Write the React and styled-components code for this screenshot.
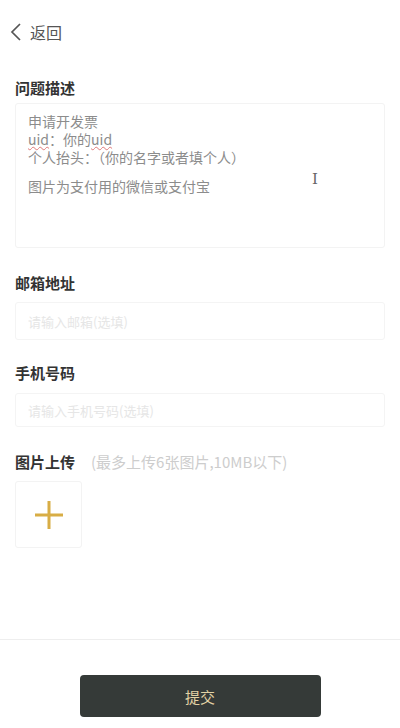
import React from 'react';
import styled, { createGlobalStyle } from 'styled-components';

const GlobalStyle = createGlobalStyle`
  html, body {
    margin: 0;
    padding: 0;
    background: #fff;
    font-family: "Noto Sans CJK SC", "Noto Sans", sans-serif;
  }
`;

const Page = styled.div`
  width: 400px;
  height: 728px;
  display: flex;
  flex-direction: column;
  background: #fff;
  overflow: hidden;
`;

const Header = styled.div`
  height: 64px;
  display: flex;
  align-items: center;
  gap: 7px;
  padding: 0 0 0 9px;
  color: #555;
  font-size: 16px;
`;

const Form = styled.div`
  flex: 1;
  padding: 13px 15px 0;
  display: flex;
  flex-direction: column;
`;

const Label = styled.div`
  display: flex;
  align-items: baseline;
  gap: 16px;
  font-size: 15px;
  font-weight: 700;
  color: #333;
  line-height: 22px;
  margin-bottom: ${p => p.gap || 8}px;
`;

const Hint = styled.span`
  font-size: 15px;
  font-weight: 400;
  color: #cdcdcd;
`;

const TextBox = styled.div`
  height: 145px;
  box-sizing: border-box;
  border: 1px solid #f3f3f3;
  border-radius: 3px;
  padding: 8px 12px 10px;
  font-size: 14px;
  line-height: 18px;
  color: #8c8c8c;
  margin-bottom: 24px;
  position: relative;
`;

const Line = styled.div`
  height: ${p => p.h || 18}px;
  line-height: 18px;
`;

const Spell = styled.span`
  text-decoration: underline wavy #e07a7a;
  text-decoration-thickness: 1px;
  text-underline-offset: 1px;
`;

const Cursor = styled.span`
  position: absolute;
  left: 296px;
  top: 66px;
  font-family: "DejaVu Serif", serif;
  font-size: 15px;
  line-height: 18px;
  color: #666;
`;

const Input = styled.input`
  height: ${p => p.h || 38}px;
  box-sizing: border-box;
  border: 1px solid #f4f4f4;
  border-radius: 3px;
  padding: 0 12px;
  font-size: 13px;
  font-family: inherit;
  color: #333;
  outline: none;
  margin-bottom: ${p => p.mb || 24}px;
  &::placeholder {
    color: #e6e6e6;
  }
`;

const UploadBox = styled.div`
  width: 67px;
  height: 67px;
  box-sizing: border-box;
  border: 1px solid #f3f3f3;
  border-radius: 3px;
  display: flex;
  align-items: center;
  justify-content: center;
`;

const Footer = styled.div`
  border-top: 1px solid #eeeeee;
  height: 89px;
  display: flex;
  justify-content: center;
  padding-top: 35px;
  box-sizing: border-box;
`;

const SubmitButton = styled.button`
  width: 241px;
  height: 42px;
  border: none;
  border-radius: 4px;
  background: #353a38;
  color: #e3d3a6;
  font-size: 15px;
  font-family: inherit;
`;

export default function App() {
  return (
    <Page>
      <GlobalStyle />
      <Header>
        <svg width="14" height="20" viewBox="0 0 14 20">
          <path d="M11 2 L3 10 L11 18" fill="none" stroke="#555" strokeWidth="1.7" />
        </svg>
        <span>返回</span>
      </Header>
      <Form>
        <Label gap={4}>问题描述</Label>
        <TextBox>
          <Line>申请开发票</Line>
          <Line><Spell>uid</Spell>：你的<Spell>uid</Spell></Line>
          <Line>个人抬头：（你的名字或者填个人）</Line>
          <Line h={11} />
          <Line>图片为支付用的微信或支付宝</Line>
          <Cursor>I</Cursor>
        </TextBox>
        <Label>邮箱地址</Label>
        <Input mb={22} placeholder="请输入邮箱(选填)" />
        <Label gap={9}>手机号码</Label>
        <Input h={34} placeholder="请输入手机号码(选填)" />
        <Label gap={8}>
          图片上传<Hint>(最多上传6张图片,10MB以下)</Hint>
        </Label>
        <UploadBox>
          <svg width="32" height="32" viewBox="0 0 32 32">
            <path d="M16 2 V30 M2 16 H30" stroke="#d8ad45" strokeWidth="3" />
          </svg>
        </UploadBox>
      </Form>
      <Footer>
        <SubmitButton>提交</SubmitButton>
      </Footer>
    </Page>
  );
}
